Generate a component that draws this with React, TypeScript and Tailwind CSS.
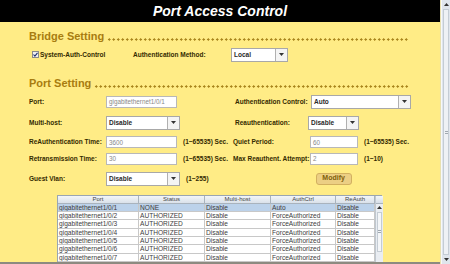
import React from "react";

const font = { fontFamily: '"Liberation Sans", Arial, sans-serif' };

function Heading({ title }: { title: string }) {
  return (
    <div className="flex items-end h-[14px]">
      <span className="text-[11px] font-bold leading-none text-[#a87c10]">{title}</span>
      <span className="ml-[3px] mb-[0.5px] h-[3px] flex-1 bg-[radial-gradient(circle,#a8841c_1px,transparent_1.3px)] bg-[length:4.5px_3px]" />
      <span className="w-[31px]" />
    </div>
  );
}

function Label({ text, w }: { text: string; w: string }) {
  return <span className={`${w} shrink-0 text-[6.5px] font-bold text-[#332a00] whitespace-nowrap`}>{text}</span>;
}

function Input({ value, w }: { value: string; w: string }) {
  return (
    <div className={`${w} h-[12px] shrink-0 bg-white border border-[#b8b8b8] flex items-center pl-[2px] text-[6.3px] text-[#888]`}>
      {value}
    </div>
  );
}

function Select({ value, w }: { value: string; w: string }) {
  return (
    <div className={`${w} h-[14px] shrink-0 bg-white border border-[#a8a8a8] flex`}>
      <span className="flex-1 flex items-center pl-[2px] text-[6.5px] font-bold text-[#2a2a2a]">{value}</span>
      <span className="w-[12px] border-l border-[#b0b0b0] bg-[#f4f4f4] flex items-center justify-center">
        <svg width="5" height="3" viewBox="0 0 5 3"><path d="M0 0h5L2.5 3z" fill="#333" /></svg>
      </span>
    </div>
  );
}

function Suffix({ text }: { text: string }) {
  return <span className="ml-[6px] text-[6.5px] font-bold text-[#332a00] whitespace-nowrap">{text}</span>;
}

const rows = [
  ["gigabitethernet1/0/1", "NONE", "Disable", "Auto", "Disable"],
  ["gigabitethernet1/0/2", "AUTHORIZED", "Disable", "ForceAuthorized", "Disable"],
  ["gigabitethernet1/0/3", "AUTHORIZED", "Disable", "ForceAuthorized", "Disable"],
  ["gigabitethernet1/0/4", "AUTHORIZED", "Disable", "ForceAuthorized", "Disable"],
  ["gigabitethernet1/0/5", "AUTHORIZED", "Disable", "ForceAuthorized", "Disable"],
  ["gigabitethernet1/0/6", "AUTHORIZED", "Disable", "ForceAuthorized", "Disable"],
  ["gigabitethernet1/0/7", "AUTHORIZED", "Disable", "ForceAuthorized", "Disable"],
];
const cols = ["w-[81px]", "w-[66px]", "w-[66px]", "w-[65px]", "w-[39px]"];
const heads = ["Port", "Status", "Multi-host", "AuthCtrl", "ReAuth"];

function PortTable() {
  return (
    <div className="ml-[28px] w-[325px] flex bg-white border-l border-t border-[#9aa6b2]">
      <div className="flex-1 flex flex-col">
        <div className="flex h-[8px] bg-gradient-to-b from-[#f3f6f9] to-[#d6dee7]">
          {heads.map((h, i) => (
            <div key={h} className={`${cols[i]} border-r border-b border-[#a9b3bd] text-center text-[6px] leading-[7px] text-[#444]`}>{h}</div>
          ))}
        </div>
        {rows.map((r, j) => (
          <div key={r[0]} className={`flex h-[8.35px] ${j === 0 ? "bg-[#bcd2ea]" : "bg-white"}`}>
            {r.map((c, i) => (
              <div key={i} className={`${cols[i]} border-r border-b border-[#c8c8c8] pl-[1px] text-[6.6px] leading-[7.3px] text-[#3c3c3c] overflow-hidden whitespace-nowrap`}>{c}</div>
            ))}
          </div>
        ))}
      </div>
      <div className="w-[8px] flex flex-col bg-[#e9edf2] border-l border-[#c0c8d0]">
        <div className="h-[8px] bg-gradient-to-b from-[#f3f6f9] to-[#d6dee7] border-b border-[#a9b3bd]" />
        <div className="h-[8px] flex items-center justify-center">
          <svg width="5" height="3" viewBox="0 0 5 3"><path d="M0 3h5L2.5 0z" fill="#333" /></svg>
        </div>
        <div className="mx-[1px] h-[40px] bg-[#f4f6f8] border border-[#c4ccd4] flex items-center justify-center">
          <span className="w-[3px] h-[3px] border-y border-[#a0a8b0]" />
        </div>
      </div>
    </div>
  );
}

export default function App() {
  return (
    <div className="w-[450px] h-[264px] flex overflow-hidden bg-[#ffec86]" style={font}>
      <div className="w-[441px] flex flex-col border-r border-[#e8e0b0]">
        <div className="h-[22px] shrink-0 bg-black flex items-center justify-center">
          <span className="text-[14px] font-bold italic text-white">Port Access Control</span>
        </div>
        <div className="flex-1 flex flex-col pl-[29px] pt-[7px] overflow-hidden">
          <Heading title="Bridge Setting" />
          <div className="flex items-center h-[14px] mt-[6px]">
            <span className="ml-[3px] w-[7px] h-[7px] bg-[#f0f0f0] border border-[#8a8a8a] flex items-center justify-center">
              <svg width="5" height="5" viewBox="0 0 5 5"><path d="M0.5 2.5l1.4 1.6L4.5 0.8" stroke="#203070" strokeWidth="1.1" fill="none" /></svg>
            </span>
            <span className="ml-[1px] w-[93px] text-[6.5px] font-bold text-[#332a00] whitespace-nowrap">System-Auth-Control</span>
            <Label text="Authentication Method:" w="w-[98px]" />
            <Select value="Local" w="w-[57px]" />
          </div>

          <div className="mt-[13px]">
            <Heading title="Port Setting" />
          </div>

          <div className="flex items-center h-[14px] mt-[6px]">
            <Label text="Port:" w="w-[77px]" />
            <Input value="gigabitethernet1/0/1" w="w-[71px]" />
            <span className="w-[58px]" />
            <Label text="Authentication Control:" w="w-[76px]" />
            <Select value="Auto" w="w-[100px]" />
          </div>

          <div className="flex items-center h-[14px] mt-[7px]">
            <Label text="Multi-host:" w="w-[77px]" />
            <Select value="Disable" w="w-[74px]" />
            <span className="w-[55px]" />
            <Label text="Reauthentication:" w="w-[73px]" />
            <Select value="Disable" w="w-[51px]" />
          </div>

          <div className="flex items-center h-[14px] mt-[6px]">
            <Label text="ReAuthentication Time:" w="w-[77px]" />
            <Input value="3600" w="w-[71px]" />
            <Suffix text="(1~65535) Sec." />
            <span className="w-[5px]" />
            <Label text="Quiet Period:" w="w-[77px]" />
            <Input value="60" w="w-[48px]" />
            <Suffix text="(1~65535) Sec." />
          </div>

          <div className="flex items-center h-[14px] mt-[4px]">
            <Label text="Retransmission Time:" w="w-[77px]" />
            <Input value="30" w="w-[71px]" />
            <Suffix text="(1~65535) Sec." />
            <span className="w-[5px]" />
            <Label text="Max Reauthent. Attempt:" w="w-[77px]" />
            <Input value="2" w="w-[48px]" />
            <Suffix text="(1~10)" />
          </div>

          <div className="flex items-center h-[14px] mt-[6px]">
            <Label text="Guest Vlan:" w="w-[77px]" />
            <Select value="Disable" w="w-[74px]" />
            <Suffix text="(1~255)" />
            <span className="w-[107px]" />
            <button className="w-[36px] h-[12px] rounded-[3px] bg-[#eccf84] border border-[#d2b060] text-[7px] font-bold text-[#7e600a] flex items-center justify-center">
              Modify
            </button>
          </div>

          <div className="mt-[9px]">
            <PortTable />
          </div>
        </div>
        <div className="h-[2px] shrink-0 bg-[#8c8a80]" />
      </div>
      <div className="w-[9px] flex flex-col bg-[#dfe5ec] border-l border-[#f6f8fa]">
        <div className="h-[9px] flex items-center justify-center">
          <svg width="5" height="3" viewBox="0 0 5 3"><path d="M0 3h5L2.5 0z" fill="#333" /></svg>
        </div>
        <div className="flex-1 mx-[1px] bg-[#eef1f5] border border-[#c4ccd4] flex items-center justify-center">
          <span className="w-[3px] h-[3px] border-y border-[#a0a8b0]" />
        </div>
        <div className="h-[9px] flex items-center justify-center">
          <svg width="5" height="3" viewBox="0 0 5 3"><path d="M0 0h5L2.5 3z" fill="#333" /></svg>
        </div>
      </div>
    </div>
  );
}
